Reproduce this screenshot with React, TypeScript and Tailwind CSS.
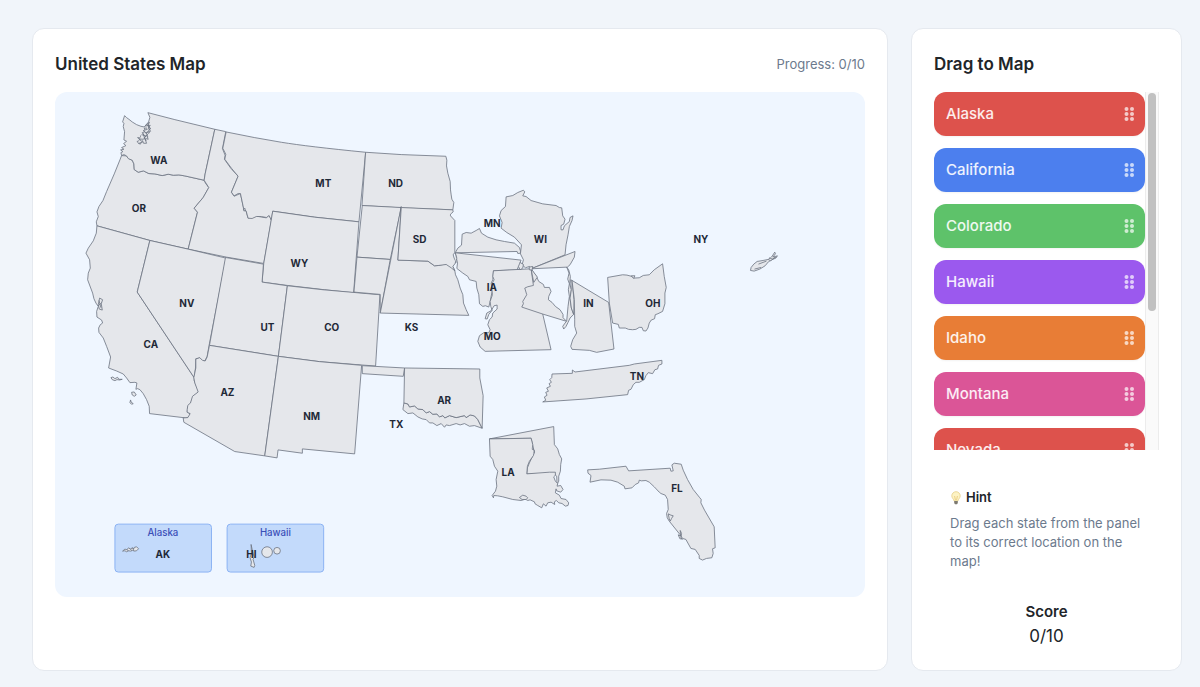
import clsx from "clsx";

type Region = { x: number; y: number; shapes: string[] };

// Outlines are grouped by region, each with its own origin in the map's units.
const regions: Region[] = [
  {
    x: 60,
    y: 24,
    shapes: [
      "M140 167L155 168 162 176 172 181 177 192 178 209 190 217 206 213 222 221 240 222 262 227 280 223 296 226 312 225 330 228 388 241 392 250 402 263 385 293 358 325 368 337 340 448 225 422 66 378 64 366 70 350 66 336 72 320 84 302 95 275 118 222 135 180Z",
      "M149 47L155 53 162 58 172 66 185 74 198 79 208 81 214 74 221 66 225 52 219 38 300 59 420 88 391 222 388 241 330 228 312 225 296 226 280 223 262 227 240 222 222 221 206 213 190 217 178 209 177 192 172 181 160 176 155 168 147 164 140 167 138 158 144 155 137 150 147 148 140 143 153 137 146 131 155 124 147 120 149 95 145 80 147 70 143 66Z",
      "M222 68L212 76 217 85 208 84 212 95 202 98 208 106 196 108 199 114 188 113 197 120 186 125 196 133 203 122 206 130 215 130 210 115 220 118 214 104 224 98 216 92 228 86 220 80Z",
      "M219 72L223 90 215 100 219 112M204 100L212 122M212 78L226 76 221 84 227 94 213 98 205 92 218 88M200 104L213 108 206 118 192 117 203 126 190 131M224 66L219 76 224 82M208 95L218 104 208 112 214 122",
      "M420 88L453 95 443 146 451 166 449 178 468 205 490 229 470 277 478 289 497 281 507 328 514 334 520 355 545 349 575 354 583 346 590 361 567 491 455 472 340 448 368 337 358 325 385 293 402 263 388 241 391 222Z",
    ],
  },
  {
    x: 480,
    y: 54,
    shapes: [
      "M34 66Q120 84 200 97T453 127L433 336 300 322 174 304 170 331 163 317 155 323 140 320 125 320 112 326 100 325 94 303 87 298 77 251 70 251 58 258 50 247 70 199 50 175 30 148 33 133 24 115Z",
      "M453 127L560 134 694 139 697 151 696 168 700 190 707 215 708 240 710 255 712 268 718 278 715 300 560 294 442 287Z",
      "M174 304L300 322 433 336 417 549 330 540 218 527 142 517 147 461Z",
      "M86 297L91 296 91 303 87 303Z",
    ],
  },
  {
    x: 60,
    y: 384,
    shapes: [
      "M66 18L225 62 187 217 358 474 358 483 372 517 355 530 348 550 339 562 337 577 346 583 343 592 333 595 224 582 223 560 215 540 205 522 195 510 188 507 183 509 186 490 180 488 165 489 155 475 145 463 125 454 101 445 107 412 95 380 85 355 72 338 71 325 76 315 83 310 80 301 66 292 65 275 70 260 63 250 57 237 53 220 38 180 40 160 46 145 44 120 33 100 40 85 55 63 64 40Z",
      "M225 62L340 88 454 115 403 376 397 410 390 424 383 423 375 415 363 417 362 445 358 474 187 217Z",
      "M74 235L83 240 79 252 82 271 73 268 70 255Z",
      "M70 258L80 249M72 242L78 264",
      "M108 474L114 472 120 477 128 473 132 479 142 479 134 481 126 480 120 483 112 480Z",
      "M170 518L178 517 184 526 178 530 172 526Z",
      "M167 541L169 548 175 552 170 554 165 549Z",
    ],
  },
  {
    x: 375,
    y: 444,
    shapes: [
      "M137 53L251 73 247 127 323 138 296 350 89 317Z",
      "M323 138L430 150 601 165 588 379 546 376 420 366 296 350Z",
      "M89 317L296 350 255 649 165 636 12 548 10 535 24 534 31 522 22 518 22 510 24 497 32 490 38 470 55 457 45 430 42 414 48 385 48 358 60 354 68 362 76 364 82 352Z",
      "M296 350L420 366 546 377 525 643 368 628 368 641 295 631 292 655 255 649Z",
    ],
  },
  {
    x: 885,
    y: 324,
    shapes: [
      "M38 17L155 23 122 179 22 172Z",
      "M22 172L122 179 92 340 92 284 13 277Z",
      "M155 20L92 340 358 347 350 330 342 310 340 285 332 265 325 240 318 225 316 213 310 200 290 192 268 197 255 198 235 184 145 181Z",
      "M155 23L310 30 311 36 303 43 303 48 316 62 316 158 311 165 314 175 320 187 310 200 316 213 305 204 290 194 268 197 255 198 235 184 145 181Z",
      "M38 498L165 505 161 530 38 522Z",
      "M163 610L175 613 180 622 195 619 205 628 220 630 230 640 240 636 250 644 262 643 270 652 280 648 286 655 300 648 320 654 345 648 350 654 362 646 375 649 385 660 398 686 375 678 360 680 345 672 332 676 320 672 300 678 290 676 285 683 275 672 262 678 250 670 240 670 230 660 218 658 205 652 190 640 175 642 160 630Z",
      "M165 505L391 508 391 535 401 588 398 686 385 660 375 649 362 646 350 654 345 648 320 654 300 648 286 655 280 648 270 652 262 643 250 644 240 636 230 640 220 630 205 628 195 619 180 622 175 613 163 610Z",
    ],
  },
  {
    x: 1185,
    y: 264,
    shapes: [
      "M17 219L25 205 36 196 38 163 50 158 65 160 80 152 90 146 96 160 115 172 140 180 165 185 195 190 210 203 215 220 205 221 203 215Z",
      "M17 219L215 241 212 248 217 256 207 260 204 268 212 270 132 273 130 300 125 310 128 335 122 365 118 382 108 378 100 380 90 372 88 345 82 325 80 305 60 300 55 290 40 280 22 266 24 250Z",
      "M17 219L22 235 17 250",
      "M132 273L245 267 258 310 280 403 305 510 107 515 92 502 85 485 90 468 103 459 118 459 122 450 115 435 120 420 128 412 130 400 143 388 143 376 134 378 125 393 112 400 107 417 113 418 118 404 128 392 124 380 122 365 129 345 126 315 134 300 130 290Z",
      "M170 51L190 47 205 38 222 31 226 36 220 48 230 50 245 62 280 72 320 77 330 83 337 84 340 108 347 118 343 133 335 137 335 150 341 150 345 138 360 125 362 113 371 108 368 122 360 140 356 165 350 195 347 225 245 267 240 260 228 264 218 255 222 240 213 222 216 195 195 172 172 158 155 145 158 128 150 108 155 92 168 80Z",
      "M245 267L377 215 375 232 362 255 354 262Z",
      "M245 267L262 292 268 305 282 314 285 323 300 323 305 335 298 350 297 360 308 368 318 380 332 390 341 404 341 414 352 425 280 403 217 382 222 372 220 365 232 345 226 325 235 321 252 317Z",
      "M245 267L253 308 264 292Z",
      "M352 262L358 270 363 290 361 312 366 330 362 355 366 385 373 404 362 415 356 428 350 440 343 448 340 440 347 430 352 424 356 380 360 350 357 330 360 312 355 298 359 280Z",
      "M364 300L368 302 374 360 373 404 366 385 362 355 366 330Z",
      "M239 262L250 260 248 271 240 270Z",
      "M207 260L212 248 222 254 220 265 212 270Z",
      "M368 302L478 368 494 508 442 518 420 512 368 509 364 500 370 480 382 460 376 440 376 420 375 360Z",
      "M475 293L520 285 533 286 548 290 553 295 570 294 582 287 600 285 615 270 640 252 645 290 651 323 647 340 647 372 640 395 626 402 618 405 616 417 606 421 600 430 596 445 590 454 582 453 578 443 570 443 560 449 550 450 538 449 528 445 510 445 507 434 490 430 480 370Z",
      "M546 288L557 288 553 296Z",
    ],
  },
  {
    x: 1245,
    y: 774,
    shapes: [
      "M248 73L309 71 309 61 317 67 480 47 495 43 578 32 578 43 568 47 565 58 557 60 550 72 537 69 530 78 525 90 510 98 500 98 492 105 485 119 478 122 475 135 350 148 220 157 229 152 225 142 233 137 229 128 237 125 232 115 243 110 239 102 246 98 241 90 247 84Z",
      "M60 268L253 231 255 285 265 298 270 315 277 328 274 345 273 365 268 380 268 395 263 405 262 380 252 372 172 373 174 355 180 340 195 308 185 266Z",
      "M60 268L185 266 190 285 189 295 195 305 192 318 180 335 174 350 172 373 240 368 258 368 258 377 253 382 258 395 265 402 263 410 274 408 281 420 274 428 262 424 260 418 258 430 270 437 275 447 290 450 298 460 296 468 288 470 278 462 268 460 261 453 255 457 256 465 245 458 235 460 230 470 222 463 217 475 205 468 197 463 195 457 182 451 175 453 168 449 155 453 130 450 100 442 85 439 73 438 72 445 68 438 78 425 82 410 80 390 85 365 75 350 70 330 62 320Z",
      "M150 444L160 437 170 440 175 445 170 450 158 450Z",
      "M187 298L194 302 194 310",
      "M355 361L390 359 470 350 478 364 603 356 605 365 612 364 608 346 615 341 636 344 642 362 655 390 672 420 692 445 696 450 695 460 706 482 735 532 738 595 730 598 732 612 728 625 712 627 700 632 690 627 690 618 678 600 665 597 650 570 640 567 632 555 600 515 594 505 592 492 597 480 595 450 588 437 575 432 570 428 555 412 540 398 530 393 516 394 510 392 508 400 498 405 488 415 467 418 465 410 445 398 425 392 395 391 362 398 365 378 356 371Z",
      "M597 493L605 497 612 499 607 507 603 515 600 508Z",
      "M633 543L637 552 635 566 640 569 632 568 627 556 634 560Z",
    ],
  },
  {
    x: 135,
    y: 1254,
    shapes: [
      "M68 125L75 119 81 121 86 115 91 119 98 115 101 119 103 114 110 112 116 118 110 124 104 125 98 123 92 125 86 124 80 127 75 124Z",
      "M81 121L86 124M91 119L96 123M98 115L102 124",
      "M454 105L458 124 463 143 460 150 465 168 463 174 453 170 455 158 451 145 455 130Z",
    ],
  },
  {
    x: 1875,
    y: 399,
    shapes: [
      "M214 137L216 128 224 118 234 110 252 107 267 104 278 96 287 82 289 87 281 97 295 93 290 100 278 105 268 111 258 123 242 133 225 139Z",
      "M267 104L275 108 288 96M270 99L280 103 292 97M238 118L262 109M226 133L246 128",
    ],
  },
];

const labels: [string, number, number][] = [
  ["WA", 312, 204],
  ["MT", 806, 275],
  ["ND", 1023, 275],
  ["OR", 252, 348],
  ["SD", 1095, 444],
  ["MN", 1313, 396],
  ["WI", 1458, 444],
  ["NY", 1940, 444],
  ["WY", 734, 516],
  ["IA", 1312, 588],
  ["IN", 1602, 636],
  ["OH", 1796, 636],
  ["NV", 396, 636],
  ["UT", 638, 708],
  ["CO", 831, 708],
  ["KS", 1071, 708],
  ["MO", 1313, 733],
  ["CA", 288, 757],
  ["AZ", 518, 902],
  ["NM", 771, 974],
  ["AR", 1169, 926],
  ["TN", 1748, 853],
  ["TX", 1025, 999],
  ["LA", 1361, 1143],
  ["FL", 1868, 1191],
  ["AK", 324, 1389],
  ["HI", 590, 1389],
];

const states = [
  { name: "Alaska", color: "bg-[#dd524c]" },
  { name: "California", color: "bg-[#4c7fee]" },
  { name: "Colorado", color: "bg-[#5ec26a]" },
  { name: "Hawaii", color: "bg-[#9b59ee]" },
  { name: "Idaho", color: "bg-[#e87d36]" },
  { name: "Montana", color: "bg-[#db5597]" },
  { name: "Nevada", color: "bg-[#dd524c]" },
];

const UsMap = () => (
  <svg
    viewBox="0 0 2433 1518"
    className="block w-full rounded-xl bg-[#eff6ff]"
    role="img"
    aria-label="United States Map"
  >
    <g fill="#c3dafb" stroke="#8bb2f3" strokeWidth="3">
      <rect x="180" y="1298" width="290" height="144" rx="10" />
      <rect x="517" y="1298" width="290" height="144" rx="10" />
    </g>
    <g fill="#e5e7eb" stroke="#6b7280" strokeWidth="2.4" strokeLinejoin="round">
      {regions.map((region) => (
        <g
          key={`${region.x}-${region.y}`}
          transform={`translate(${region.x} ${region.y})`}
        >
          {region.shapes.map((d) => (
            <path key={d} d={d} />
          ))}
        </g>
      ))}
      <circle cx="637" cy="1382" r="16" />
      <circle cx="667" cy="1378" r="10" />
    </g>
    <g
      className="text-[29px] font-medium"
      fill="#3b4fb8"
      textAnchor="middle"
    >
      <text x="324" y="1334">
        Alaska
      </text>
      <text x="662" y="1334">
        Hawaii
      </text>
    </g>
    <g className="text-[30px] font-bold" fill="#1f2937" textAnchor="middle">
      {labels.map(([code, x, y]) => (
        <text key={code} x={x} y={y + 11}>
          {code}
        </text>
      ))}
    </g>
  </svg>
);

const GripIcon = () => (
  <svg width="12" height="14" viewBox="0 0 12 14" fill="#fff" opacity="0.7">
    {[2, 7, 12].map((y) => (
      <g key={y}>
        <circle cx="3.5" cy={y} r="2" />
        <circle cx="9" cy={y} r="2" />
      </g>
    ))}
  </svg>
);

const BulbIcon = () => (
  <svg width="12" height="14" viewBox="0 0 12 14">
    <path
      d="M6 .7a4.2 4.2 0 0 0-4.2 4.2c0 2 1.7 2.9 2.2 5h4c.5-2.1 2.2-3 2.2-5A4.2 4.2 0 0 0 6 .7Z"
      fill="#fdf3c4"
      stroke="#e6cf86"
      strokeWidth="0.8"
    />
    <path d="M4.6 5l.8 4M7.4 5l-.8 4" stroke="#e0b75a" strokeWidth="0.6" />
    <path d="M4.2 10h3.6v2L7 13.3H5L4.2 12Z" fill="#7d7a70" />
  </svg>
);

const App = () => {
  return (
    <div className="flex min-h-screen gap-[23px] bg-[#f1f5fa] pt-7 pr-[18px] pb-4 pl-8 font-['Inter',sans-serif] text-[#212529]">
      <main className="min-w-0 flex-1 rounded-xl border border-[#e5e9ef] bg-white p-[22px]">
        <div className="mb-[13px] flex h-7 items-center justify-between">
          <h1 className="text-[17px] font-semibold">United States Map</h1>
          <span className="text-[13px] text-[#6c7a8d]">Progress: 0/10</span>
        </div>
        <UsMap />
      </main>
      <aside className="w-[271px] shrink-0 rounded-xl border border-[#e5e9ef] bg-white p-[22px]">
        <h2 className="mb-[13px] flex h-7 items-center text-[17px] font-semibold">
          Drag to Map
        </h2>
        <div className="flex h-[358px] overflow-hidden">
          <div className="flex flex-1 flex-col gap-3">
            {states.map((state) => (
              <button
                key={state.name}
                type="button"
                draggable
                className={clsx(
                  "flex h-11 shrink-0 cursor-grab items-center justify-between rounded-xl pr-[10px] pl-3 text-[15px] font-medium text-white/90 shadow-xs",
                  state.color
                )}
              >
                {state.name}
                <GripIcon />
              </button>
            ))}
          </div>
          <div className="flex w-[14px] justify-center border-x border-[#ececec] bg-[#fafafa] pt-px">
            <div className="h-[218px] w-2 rounded-full bg-[#c1c1c1]" />
          </div>
        </div>
        <div className="mt-6 p-4 pt-3.5">
          <h3 className="mb-[7px] flex items-center gap-1 text-[13px] leading-[19px] font-semibold">
            <BulbIcon />
            Hint
          </h3>
          <p className="text-[13px] leading-[19px] text-[#6c7a8d]">
            Drag each state from the panel to its correct location on the map!
          </p>
        </div>
        <div className="mt-[13px] text-center">
          <p className="text-[15px] leading-6 font-semibold">Score</p>
          <p className="text-[17px] leading-6">0/10</p>
        </div>
      </aside>
    </div>
  );
};

export default App;
